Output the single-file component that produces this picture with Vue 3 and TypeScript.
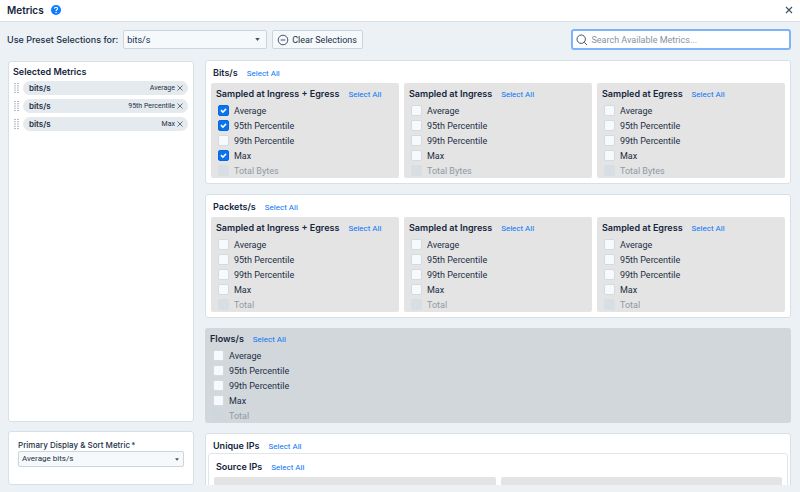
<script setup lang="ts">
import { computed, reactive, ref } from 'vue'

interface Metric {
  id: string
  label: string
  disabled: boolean
}

interface Group {
  id: string
  title: string
  metrics: Metric[]
}

interface Section {
  id: string
  title: string
  unit: string
  groups: Group[]
}

const names = ['Average', '95th Percentile', '99th Percentile', 'Max']

function makeMetrics(prefix: string, total: string): Metric[] {
  return [...names, total].map((label, i) => ({
    id: `${prefix}-${i}`,
    label,
    disabled: i === names.length,
  }))
}

function makeGroups(prefix: string, total: string): Group[] {
  return ['Sampled at Ingress + Egress', 'Sampled at Ingress', 'Sampled at Egress'].map((title, i) => ({
    id: `${prefix}-${i}`,
    title,
    metrics: makeMetrics(`${prefix}-${i}`, total),
  }))
}

const sections: Section[] = [
  { id: 'bits', title: 'Bits/s', unit: 'bits/s', groups: makeGroups('bits', 'Total Bytes') },
  { id: 'packets', title: 'Packets/s', unit: 'packets/s', groups: makeGroups('packets', 'Total') },
]
const flows = makeMetrics('flows', 'Total')

const checked = reactive<Record<string, boolean>>({
  'bits-0-0': true,
  'bits-0-1': true,
  'bits-0-3': true,
})

const selected = computed(() => [
  ...sections.flatMap((s) =>
    s.groups.flatMap((g) => g.metrics.filter((m) => checked[m.id]).map((m) => ({ ...m, unit: s.unit }))),
  ),
  ...flows.filter((m) => checked[m.id]).map((m) => ({ ...m, unit: 'flows/s' })),
])

const preset = ref('bits/s')
const primary = ref('Average bits/s')
const query = ref('')

function selectAll(metrics: Metric[]) {
  metrics.filter((m) => !m.disabled).forEach((m) => (checked[m.id] = true))
}

function clearAll() {
  Object.keys(checked).forEach((id) => (checked[id] = false))
}
</script>

<template>
  <div class="dialog">
    <header class="header">
      <h1>Metrics</h1>
      <button class="plain" type="button" aria-label="Help">
        <svg class="help" viewBox="0 0 20 20">
          <circle cx="10" cy="10" r="10" fill="#0a7cff" />
          <path d="M6.8 7.6c0-1.9 1.3-3.1 3.2-3.1s3.2 1.1 3.2 2.8c0 2.3-3.1 2.3-3.1 4.6" fill="none" stroke="#fff" stroke-width="2.2" />
          <circle cx="10.1" cy="14.9" r="1.5" fill="#fff" />
        </svg>
      </button>
      <button class="plain close" type="button" aria-label="Close">
        <svg class="close-icon" viewBox="0 0 8 8"><path d="M1 1l6 6M7 1L1 7" /></svg>
      </button>
    </header>

    <div class="toolbar">
      <label class="preset-label" for="preset">Use Preset Selections for:</label>
      <span class="select preset">
        <select id="preset" v-model="preset">
          <option>bits/s</option>
          <option>packets/s</option>
        </select>
        <svg class="caret" viewBox="0 0 6 4"><path d="M0 0h6L3 4z" /></svg>
      </span>
      <button class="clear" type="button" @click="clearAll">
        <svg class="minus" viewBox="0 0 12 12">
          <circle cx="6" cy="6" r="4.8" />
          <path d="M3.6 6h4.8" />
        </svg>
        Clear Selections
      </button>
      <label class="search">
        <svg class="glass" viewBox="0 0 12 12">
          <circle cx="5.2" cy="5.2" r="4.2" />
          <path d="M8.3 8.3L11 11" />
        </svg>
        <input v-model="query" type="text" placeholder="Search Available Metrics..." aria-label="Search Available Metrics" />
      </label>
    </div>

    <main class="body">
      <aside class="side">
        <section class="card chosen">
          <h2>Selected Metrics</h2>
          <ul>
            <li v-for="item in selected" :key="item.id">
              <svg class="grip" viewBox="0 0 5 10">
                <path d="M1 0v10M4 0v10" stroke-dasharray="1 1.25" />
              </svg>
              <span class="pill">
                <b>{{ item.unit }}</b>
                <span class="kind">{{ item.label }}</span>
                <button class="plain" type="button" :aria-label="`Remove ${item.label}`" @click="checked[item.id] = false">
                  <svg class="remove" viewBox="0 0 6 6"><path d="M.5 .5l5 5M5.5 .5l-5 5" /></svg>
                </button>
              </span>
            </li>
          </ul>
        </section>
        <section class="card primary">
          <label for="primary">Primary Display &amp; Sort Metric<span class="star">*</span></label>
          <span class="select small">
            <select id="primary" v-model="primary">
              <option>Average bits/s</option>
              <option>95th Percentile bits/s</option>
              <option>Max bits/s</option>
            </select>
            <svg class="caret" viewBox="0 0 6 4"><path d="M0 0h6L3 4z" /></svg>
          </span>
        </section>
      </aside>

      <div class="list">
        <section v-for="section in sections" :key="section.id" class="card section">
          <div class="head">
            <h2>{{ section.title }}</h2>
            <button class="link" type="button" @click="section.groups.forEach((g) => selectAll(g.metrics))">Select All</button>
          </div>
          <div class="groups">
            <div v-for="group in section.groups" :key="group.id" class="group">
              <div class="head">
                <h3>{{ group.title }}</h3>
                <button class="link" type="button" @click="selectAll(group.metrics)">Select All</button>
              </div>
              <label v-for="m in group.metrics" :key="m.id" class="check" :class="{ off: m.disabled }">
                <input v-model="checked[m.id]" type="checkbox" :disabled="m.disabled" />
                {{ m.label }}
              </label>
            </div>
          </div>
        </section>

        <section class="flows">
          <div class="head">
            <h2>Flows/s</h2>
            <button class="link" type="button" @click="selectAll(flows)">Select All</button>
          </div>
          <label v-for="m in flows" :key="m.id" class="check" :class="{ off: m.disabled }">
            <input v-model="checked[m.id]" type="checkbox" :disabled="m.disabled" />
            {{ m.label }}
          </label>
        </section>

        <section class="card unique">
          <div class="head">
            <h2>Unique IPs</h2>
            <button class="link" type="button">Select All</button>
          </div>
          <div class="nested">
            <div class="head">
              <h3>Source IPs</h3>
              <button class="link" type="button">Select All</button>
            </div>
            <div class="groups">
              <div class="group empty"></div>
              <div class="group empty"></div>
            </div>
          </div>
        </section>
      </div>
    </main>
  </div>
</template>

<style>
body {
  background: #ebf1f5;
}
</style>

<style scoped>
* {
  box-sizing: border-box;
}

.dialog {
  display: flex;
  flex-direction: column;
  height: 100vh;
  overflow: hidden;
  background: #ebf1f5;
  color: #1c2f45;
  font: 9px/12px Roboto, "Liberation Sans", sans-serif;
}

h1,
h2,
h3,
ul {
  margin: 0;
  padding: 0;
}

h1,
h2,
h3 {
  color: #14263c;
  font: 600 9px/12px Inter, Roboto, sans-serif;
}

button,
select,
input {
  margin: 0;
  color: inherit;
  font: inherit;
}

svg {
  display: block;
  flex: none;
}

.plain {
  padding: 0;
  border: 0;
  background: none;
}

.header {
  display: flex;
  align-items: center;
  gap: 7px;
  height: 22px;
  flex: none;
  padding: 0 7px 2px;
  border-bottom: 1px solid #d9e0e5;
  background: #fff;
}

.header h1 {
  font-size: 10px;
}

.help {
  width: 10px;
  height: 10px;
}

.close {
  margin-left: auto;
}

.close-icon {
  width: 8px;
  height: 8px;
  fill: none;
  stroke: #405468;
  stroke-width: 1.2;
}

.toolbar {
  display: flex;
  align-items: center;
  flex: none;
  padding: 7px 9px 10px 7px;
}

.preset-label {
  margin-right: 5px;
  font: 500 9px/12px Inter, Roboto, sans-serif;
}

.select {
  display: grid;
  align-items: center;
}

.select > * {
  grid-area: 1 / 1;
}

.select select {
  width: 100%;
  height: 19px;
  padding: 0 3px;
  border: 1px solid #ccd5dc;
  border-radius: 2px;
  background: #f5f9fc;
  appearance: none;
}

.caret {
  width: 5px;
  height: 3px;
  margin-right: 7px;
  justify-self: end;
  fill: #405468;
  pointer-events: none;
}

.preset {
  width: 144px;
}

.clear {
  display: flex;
  align-items: center;
  gap: 3px;
  height: 19px;
  margin-left: 5px;
  padding: 0 5px 0 4px;
  border: 1px solid #ccd5dc;
  border-radius: 2px;
  background: #f5f9fc;
}

.minus,
.glass {
  width: 12px;
  height: 12px;
  fill: none;
  stroke: #405468;
  stroke-width: 1;
}

.search {
  display: flex;
  align-items: center;
  gap: 3px;
  width: 28%;
  height: 21px;
  margin-left: auto;
  padding: 0 3px;
  border: 2px solid #7fb3f8;
  border-radius: 3px;
  background: #fff;
}

.search input {
  flex: 1;
  min-width: 0;
  padding: 0;
  border: 0;
  outline: 0;
  background: none;
}

.search input::placeholder {
  color: #8593a0;
}

.body {
  display: grid;
  grid-template-columns: 186px minmax(0, 1fr);
  gap: 11px;
  flex: 1;
  min-height: 0;
  padding: 0 9px 7px 8px;
}

.card {
  border: 1px solid #d9e0e5;
  border-radius: 3px;
  background: #fff;
}

.side {
  display: flex;
  flex-direction: column;
  gap: 9px;
  padding-top: 1px;
}

.chosen {
  flex: 1;
  padding: 4px 5px 4px 4px;
}

.chosen ul {
  display: grid;
  gap: 4px;
  margin-top: 3px;
  list-style: none;
}

.chosen li {
  display: flex;
  align-items: center;
  gap: 4px;
}

.grip {
  width: 5px;
  height: 10px;
  margin-left: 1px;
  fill: none;
  stroke: #66778a;
  stroke-width: 1;
}

.pill {
  display: flex;
  align-items: center;
  gap: 2px;
  flex: 1;
  height: 14px;
  padding: 0 5px 0 6px;
  border-radius: 7px;
  background: #e5eaee;
}

.pill b {
  font: 600 8px/12px Inter, Roboto, sans-serif;
}

.kind {
  margin-left: auto;
  font-size: 7px;
}

.remove {
  width: 6px;
  height: 6px;
  fill: none;
  stroke: #405468;
  stroke-width: 0.8;
}

.primary {
  padding: 7px 9px 17px;
}

.primary label {
  font: 500 8px/12px Inter, Roboto, sans-serif;
}

.star {
  margin-left: 1px;
}

.small {
  font-size: 8px;
}

.small select {
  height: 16px;
  padding: 0 3px;
}

.small .caret {
  width: 4px;
  margin-right: 5px;
}

.list {
  display: flex;
  flex-direction: column;
  gap: 10px;
  min-height: 0;
  overflow: hidden;
}

.list > * {
  flex: none;
}

.head {
  display: flex;
  align-items: center;
  gap: 9px;
}

.link {
  padding: 2px 0 0;
  border: 0;
  background: none;
  color: #0a74f5;
  font-size: 8px;
  line-height: 11px;
}

.section {
  padding: 5px;
}

.section > .head,
.unique > .head {
  padding-left: 2px;
}

.groups {
  display: flex;
  gap: 5px;
  margin-top: 4px;
}

.group {
  flex: 1;
  min-width: 0;
  padding: 4px 5px 0;
  border-radius: 2px;
  background: #e4e4e4;
}

.check {
  display: flex;
  align-items: center;
  gap: 5px;
  width: max-content;
  height: 15px;
  padding-left: 2px;
}

.group .head + .check,
.flows .head + .check {
  margin-top: 3px;
}

.check input {
  display: grid;
  place-content: center;
  width: 11px;
  height: 11px;
  border: 1px solid #d3dbe1;
  border-radius: 2px;
  background: #f7fafd;
  appearance: none;
}

.check input:checked {
  border-color: #0a68d8;
  background: #0a74f0;
}

.check input:checked::before {
  width: 7px;
  height: 7px;
  background: #fff;
  clip-path: polygon(6% 52%, 22% 36%, 42% 56%, 78% 18%, 94% 34%, 42% 88%);
  content: "";
}

.off {
  color: #8f9aa5;
}

.off input {
  border-color: #d7dfe4;
  background: #d7dfe4;
}

.flows {
  padding: 4px 5px 0;
  border-radius: 3px;
  background: #d2d7db;
}

.flows .check {
  padding-left: 3px;
}

.flows .off input {
  border-color: #d0d7dc;
  background: #d0d7dc;
}

.unique {
  padding: 5px 2px;
}

.unique > .head {
  padding-left: 5px;
}

.nested {
  margin-top: 1px;
  padding: 6px 5px 5px;
  border: 1px solid #e2e6e9;
  border-radius: 3px;
}

.nested > .head {
  padding-left: 2px;
}

.empty {
  height: 95px;
}
</style>
